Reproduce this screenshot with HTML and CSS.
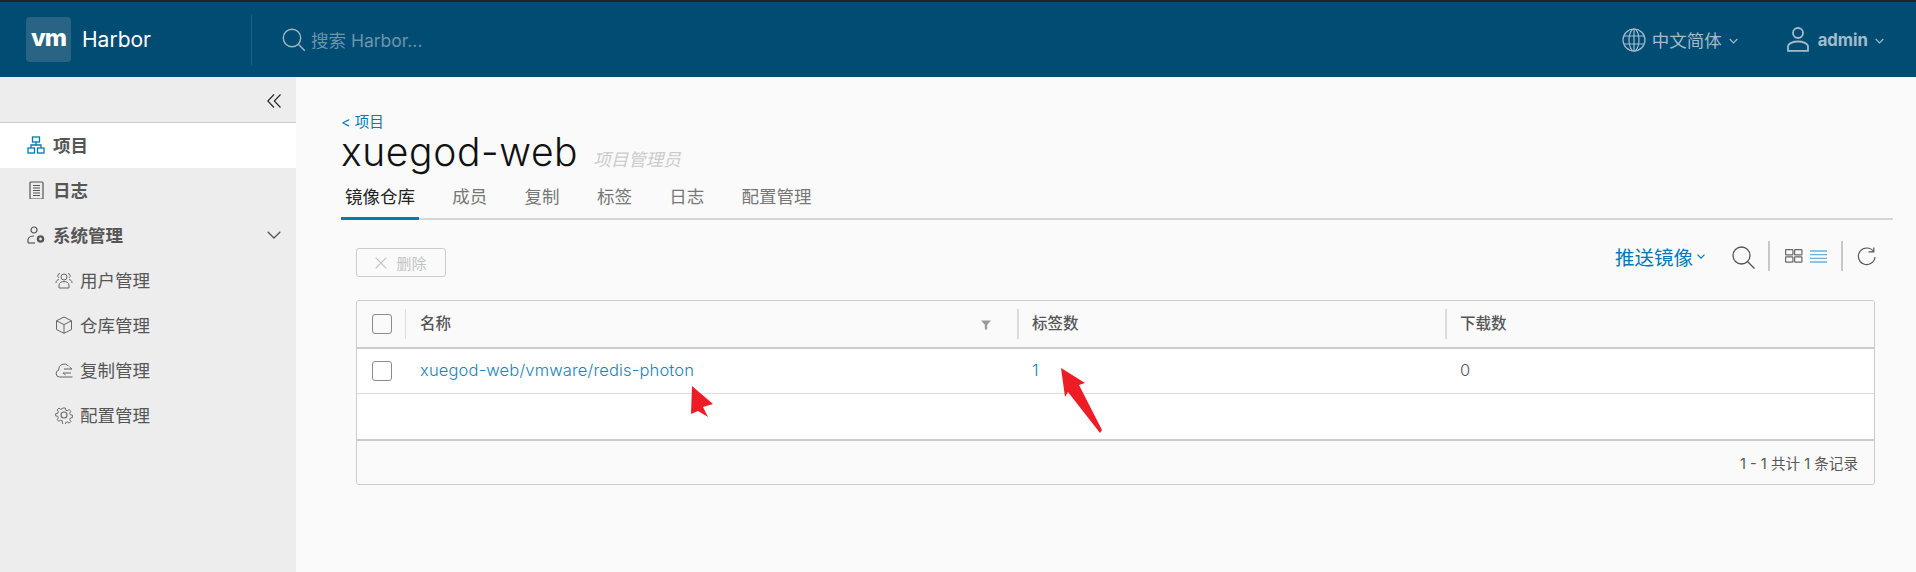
FILE: index.html
```html
<!DOCTYPE html>
<html lang="zh">
<head>
<meta charset="utf-8">
<title>Harbor</title>
<link rel="stylesheet" href="styles.css">
</head>
<body>
<div class="app">
  <header class="topbar">
    <div class="logo"><span class="logo-vm">vm</span></div>
    <span class="brand">Harbor</span>
    <div class="top-divider"></div>
    <svg class="search-ic" width="24" height="24" viewBox="0 0 24 24" fill="none" stroke="#9db9c9" stroke-width="1.4"><circle cx="10" cy="10" r="8.7"/><path d="M16.3 16.3 22.8 22.8"/></svg>
    <span class="search-text">搜索 Harbor...</span>
    <div class="spacer"></div>
    <svg class="globe" width="24" height="24" viewBox="0 0 24 24" fill="none" stroke="#a3bccb" stroke-width="1.2"><circle cx="12" cy="12" r="11"/><ellipse cx="12" cy="12" rx="5" ry="11"/><path d="M12 1v22M2 8h20M2 16h20"/></svg>
    <span class="lang">中文简体</span>
    <svg class="chev" width="9" height="6" viewBox="0 0 9 6" fill="none" stroke="#a3bccb" stroke-width="1.2"><path d="M.7 1 4.5 4.8 8.3 1"/></svg>
    <svg class="user" width="22" height="25" viewBox="0 0 22 25" fill="none" stroke="#a3bccb" stroke-width="1.8"><circle cx="11" cy="6" r="5"/><path d="M1 23.8v-4.3C1 16.5 6 14.5 11 14.5s10 2 10 5v4.300z"/></svg>
    <span class="admin">admin</span>
    <svg class="chev" width="9" height="6" viewBox="0 0 9 6" fill="none" stroke="#a3bccb" stroke-width="1.2"><path d="M.7 1 4.5 4.8 8.3 1"/></svg>
  </header>
  <div class="body-row">
    <aside class="sidebar">
      <div class="collapse">
        <svg width="14" height="14" viewBox="0 0 14 14" fill="none" stroke="#222" stroke-width="1.1"><path d="M7 .5.8 7 7 13.500M13.500.5 7.300 7l6.200 6.500"/></svg>
      </div>
      <a class="nav nav-main active">
        <svg class="nav-ic" width="18" height="18" viewBox="0 0 18 18" fill="none" stroke="#0079b8" stroke-width="1.3"><rect x="5.500" y="1" width="7" height="5"/><rect x="1" y="12" width="6.500" height="5"/><rect x="10.500" y="12" width="6.500" height="5"/><path d="M9 6v3M4 12V9h10v3"/></svg>
        <span>项目</span>
      </a>
      <a class="nav nav-main">
        <svg class="nav-ic" width="18" height="18" viewBox="0 0 18 18" fill="none" stroke="#565656" stroke-width="1.200"><rect x="3" y="1" width="13" height="17" rx="1"/><path d="M6 4.500h7M6 7h7M6 9.500h7M6 12h7M6 14.500h7"/></svg>
        <span>日志</span>
      </a>
      <a class="nav nav-main">
        <svg class="nav-ic" width="18" height="18" viewBox="0 0 18 18" fill="none" stroke="#565656" stroke-width="1.200"><circle cx="7" cy="4" r="3"/><path d="M1 17v-3c0-2.500 3-4 6-4"/><path d="M1 17h7"/><circle cx="13.500" cy="13" r="2.600" stroke-width="2.400"/></svg>
        <span>系统管理</span>
        <svg class="nav-chev" width="14" height="8" viewBox="0 0 14 8" fill="none" stroke="#565656" stroke-width="1.300"><path d="M.7.7 7 7 13.300.7"/></svg>
      </a>
      <a class="nav nav-sub">
        <svg class="nav-ic" width="18" height="18" viewBox="0 0 18 18" fill="none" stroke="#666" stroke-width="1"><circle cx="9" cy="6" r="3"/><path d="M4 17v-3c0-2 2.500-3.500 5-3.500s5 1.500 5 3.500v3z"/><path d="M5 2.500a2.300 2.300 0 0 0-1 4.300M1 12c0-2 1-3 3-3.500M13 2.500a2.300 2.300 0 0 1 1 4.300M17 12c0-2-1-3-3-3.500"/></svg>
        <span>用户管理</span>
      </a>
      <a class="nav nav-sub">
        <svg class="nav-ic" width="18" height="18" viewBox="0 0 18 18" fill="none" stroke="#666" stroke-width="1"><path d="M9 1 16.500 4.800v8.700L9 17.300 1.500 13.500V4.800z"/><path d="M1.500 4.800 9 8.600l7.500-3.800M9 8.600v8.700"/></svg>
        <span>仓库管理</span>
      </a>
      <a class="nav nav-sub">
        <svg class="nav-ic" width="18" height="18" viewBox="0 0 18 18" fill="none" stroke="#666" stroke-width="1"><path d="M17.500 16H4.500a3.500 3.500 0 0 1-.7-6.900 5.500 5.500 0 0 1 9.700-4.100"/><path d="M9 8h8M14.500 6l2.500 2M8 12h8M8 12l2.500 2"/></svg>
        <span>复制管理</span>
      </a>
      <a class="nav nav-sub">
        <svg class="nav-ic" width="18" height="18" viewBox="0 0 18 18" fill="none" stroke="#666" stroke-width="1.100"><circle cx="9" cy="9" r="3"/><path d="M7.500 1h3l.5 2.500 1.700.7 2.100-1.400 2 2-1.400 2.200.7 1.600 2.400.5v2.800l-2.400.5-.7 1.700 1.400 2.100-2 2-2.100-1.400-1.700.7-.5 2.400h-3L7 15.500l-1.700-.7-2.100 1.400-2-2 1.400-2.100-.7-1.700L-.5 10V7.500l2.400-.5.700-1.700-1.400-2.100 2-2 2.100 1.400L7 1.900z" transform="translate(1.100 1.100) scale(.88)"/></svg>
        <span>配置管理</span>
      </a>
    </aside>
    <main class="content">
      <a class="crumb">&lt; 项目</a>
      <div class="title-row">
        <h1 class="title">xuegod-web</h1>
        <span class="role">项目管理员</span>
      </div>
      <nav class="tabs">
        <a class="tab current">镜像仓库</a>
        <a class="tab">成员</a>
        <a class="tab">复制</a>
        <a class="tab">标签</a>
        <a class="tab">日志</a>
        <a class="tab">配置管理</a>
      </nav>
      <section class="panel">
        <div class="toolbar">
          <button class="del-btn" type="button">
            <svg width="12" height="12" viewBox="0 0 12 12" fill="none" stroke="#c4c4c4" stroke-width="1.200"><path d="M.7.7 11.300 11.300M11.300.7.7 11.300"/></svg>
            <span>删除</span>
          </button>
          <div class="spacer"></div>
          <a class="push">推送镜像</a>
          <svg class="push-chev" width="8" height="5" viewBox="0 0 8 5" fill="none" stroke="#0079b8" stroke-width="1.200"><path d="M.5.7 4 4.200 7.500.7"/></svg>
          <svg class="tool-search" width="23" height="23" viewBox="0 0 23 23" fill="none" stroke="#565656" stroke-width="1.300"><circle cx="9.500" cy="9.500" r="8.500"/><path d="M15.700 15.700 22.500 22.500"/></svg>
          <div class="tool-sep first"></div>
          <svg class="tool-grid" width="18" height="14" viewBox="0 0 18 14" fill="none" stroke="#666" stroke-width="1.200"><rect x=".6" y=".6" width="7.300" height="5.300" rx=".6"/><rect x="9.600" y=".6" width="7.300" height="5.300" rx=".6"/><rect x=".6" y="7.900" width="7.300" height="5.300" rx=".6"/><rect x="9.600" y="7.900" width="7.300" height="5.300" rx=".6"/></svg>
          <svg class="tool-list" width="17" height="13" viewBox="0 0 17 13" fill="none" stroke="#6cb2d8" stroke-width="1.300"><path d="M0 1h17M0 4.700h17M0 8.300h17M0 12h17"/></svg>
          <div class="tool-sep second"></div>
          <svg class="tool-refresh" width="19" height="19" viewBox="0 0 19 19" fill="none" stroke="#565656" stroke-width="1.200"><path d="M16.500 4.500A8.300 8.300 0 1 0 18 10"/><path d="M11.500 4.800h5.300V.5"/></svg>
        </div>
        <div class="grid">
          <div class="row head">
            <div class="cell check"><span class="box"></span></div>
            <div class="cell name sep"><span class="head-label">名称</span><svg class="filter" width="10" height="10" viewBox="0 0 10 10" fill="#9a9a9a"><path d="M0 .5h10L6.200 4.800V9.500H3.800V4.800z"/></svg></div>
            <div class="cell tags sep"><span class="head-label">标签数</span></div>
            <div class="cell pulls sep"><span class="head-label">下载数</span></div>
          </div>
          <div class="row item">
            <div class="cell check"><span class="box"></span></div>
            <div class="cell name"><a class="link">xuegod-web/vmware/redis-photon</a></div>
            <div class="cell tags"><a class="link">1</a></div>
            <div class="cell pulls"><span class="count">0</span></div>
          </div>
          <div class="row filler"></div>
          <div class="foot">1 - 1 共计 1 条记录</div>
        </div>
      </section>
    </main>
  </div>
  <svg class="marks" width="1916" height="572" viewBox="0 0 1916 572" fill="#ee1c25">
    <polygon points="692,386 713,404 703,407 708,417 698,411 691,414"/>
    <polygon points="1061,368 1085,383 1079,385 1102,430 1100,433 1068,392 1065,397"/>
  </svg>
</div>
</body>
</html>
```

FILE: styles.css
```css
* { box-sizing: border-box; }
html, body { margin: 0; padding: 0; height: 100%; overflow: hidden; }
body {
  font-family: "Inter", "Noto Sans CJK SC", "Noto Sans", sans-serif;
  background: #fafafa;
  color: #565656;
}
a { text-decoration: none; }
.app { position: relative; width: 1916px; height: 572px; border-top: 2px solid #222; display: flex; flex-direction: column; }
.spacer { flex: 1; }

.topbar { height: 75px; background: #004c73; display: flex; align-items: center; flex: none; padding-left: 26px; }
.logo { width: 45px; height: 45px; border-radius: 4px; background: #2a6484; display: flex; align-items: center; justify-content: center; }
.logo-vm { color: #fff; font-size: 24px; font-weight: 800; letter-spacing: -1px; line-height: 1; margin-top: -3px; }
.brand { color: #fff; font-size: 21px; margin-left: 11px; width: 169px; }
.top-divider { width: 1px; height: 50px; background: #1d6185; margin-right: 30px; }
.search-ic { margin-right: 5px; }
.search-text { color: #6e94aa; font-size: 17.500px; }
.globe { margin-right: 6px; }
.lang { color: #a3bccb; font-size: 17.500px; }
.chev { margin-left: 7px; margin-top: 2px; }
.user { margin-left: 49px; margin-right: 9px; }
.admin { color: #a3bccb; font-size: 16.700px; font-weight: 700; }
.topbar > .chev:last-child { margin-right: 32px; }

.body-row { flex: 1; display: flex; min-height: 0; }
.sidebar { width: 296px; flex: none; background: #ededed; }
.collapse { height: 46px; border-bottom: 1px solid #ccc; display: flex; align-items: center; justify-content: flex-end; padding-right: 15px; padding-top: 2px; }
.nav { height: 45px; display: flex; align-items: center; color: #565656; padding-bottom: 2px; }
.nav-main { padding-left: 27px; font-size: 17.500px; font-weight: 700; }
.nav-main .nav-ic { margin-right: 8px; }
.nav-sub { padding-left: 55px; font-size: 17.500px; }
.nav-sub .nav-ic { margin-right: 7px; }
.nav.active { background: #fff; }
.nav-chev { margin-left: auto; margin-right: 15px; }

.content { flex: 1; padding: 35px 23px 0 45px; min-width: 0; }
.crumb { display: block; color: #0079b8; font-size: 14.500px; line-height: 20px; }
.title-row { display: flex; align-items: baseline; height: 51px; }
.title { margin: 0; color: #111; font-size: 39px; font-weight: 300; line-height: 40px; letter-spacing: .6px; }
.role { margin-left: 15px; color: #ccc; font-size: 17.500px; font-style: italic; }
.tabs { display: flex; height: 37px; border-bottom: 2px solid #d6d6d6; }
.tab { padding: 0 4px; margin-right: 29.300px; height: 37px; font-size: 17.500px; line-height: 28px; color: #777; }
.tab.current { color: #222; border-bottom: 3px solid #0079b8; }

.panel { padding: 0 18px 0 15px; }
.toolbar { display: flex; align-items: center; height: 80px; padding: 21px 0 29px; margin-right: -2px; }
.del-btn { width: 90px; height: 29px; margin-top: 13px; border: 1px solid #ccc; border-radius: 3px; background: transparent; display: flex; align-items: center; justify-content: center; gap: 9px; padding: 0; color: #c4c4c4; font: 15px "Inter", "Noto Sans CJK SC", sans-serif; }
.push { color: #0079b8; font-size: 19.500px; }
.push-chev { margin-left: 4px; }
.tool-search { margin-left: 27px; margin-top: 3px; }
.tool-sep { width: 2px; height: 30px; background: #c8c8c8; margin-left: 13px; }
.tool-grid { margin-left: 15px; }
.tool-list { margin-left: 7px; }
.tool-sep.second { margin-left: 14px; }
.tool-refresh { margin-left: 14px; margin-right: 1px; }

.grid { border: 1px solid #ccc; border-radius: 3px; background: #fff; }
.row { display: grid; grid-template-columns: 48px 612px 428px 1fr; }
.cell { display: flex; align-items: center; position: relative; padding-left: 15px; }
.head { height: 48px; background: #fafafa; border-bottom: 2px solid #ccc; border-radius: 3px 3px 0 0; font-size: 15.500px; font-weight: 500; }
.head-label { margin-bottom: 4px; }
.item { height: 45px; border-bottom: 1px solid #ddd; font-size: 16.500px; }
.filler { height: 47px; display: block; border-bottom: 2px solid #ccc; }
.check { padding-left: 15px; }
.box { display: block; width: 20px; height: 20px; border: 1px solid #8c8c8c; border-radius: 3px; background: #fff; }
.head .box { background: #fafafa; }
.sep::before { content: ""; position: absolute; left: 0; top: 8px; bottom: 8px; width: 2px; background: #dcdcdc; }
.name.sep::before { width: 1px; }
.filter { position: absolute; right: 26px; top: 19px; }
.link { color: #1a83bc; font-weight: 300; letter-spacing: .16px; margin-bottom: 2px; }
.count { font-weight: 300; margin-bottom: 2px; }
.foot { height: 43px; background: #fafafa; border-radius: 0 0 3px 3px; display: flex; align-items: center; justify-content: flex-end; padding-right: 16px; font-size: 14.600px; color: #565656; }

.marks { position: absolute; left: 0; top: -2px; pointer-events: none; }
```
